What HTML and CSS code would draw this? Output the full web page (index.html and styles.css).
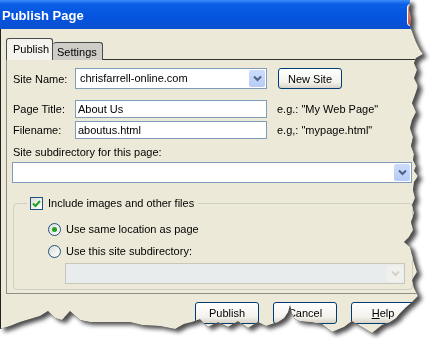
FILE: index.html
```html
<!DOCTYPE html>
<html>
<head>
    <title>Publish Page</title>
    <meta charset="UTF-8">
    <link rel="stylesheet" href="styles.css">
</head>
<body>
    <div class="torn-shadow">
        <div class="dialog">
            <div class="title-bar">
                <span class="title">Publish Page</span>
                <span class="close-btn"></span>
            </div>
            <div class="dialog-body">
                <div class="tabs">
                    <div class="tab active">Publish</div>
                    <div class="tab">Settings</div>
                </div>
                <div class="tab-panel">
                    <div class="row row-site">
                        <span class="field-label">Site Name:</span>
                        <div class="combo site-combo">
                            <span class="combo-text">chrisfarrell-online.com</span>
                            <span class="combo-btn">
                                <svg width="9" height="7" viewBox="0 0 9 7"><path d="M1 1.5 L4.5 5 L8 1.5" fill="none" stroke="#4d6185" stroke-width="2"/></svg>
                            </span>
                        </div>
                        <button class="xp-btn new-site">New Site</button>
                    </div>
                    <div class="row row-title">
                        <span class="field-label">Page Title:</span>
                        <div class="text-input">About Us</div>
                        <span class="hint">e.g.: "My Web Page"</span>
                    </div>
                    <div class="row row-file">
                        <span class="field-label">Filename:</span>
                        <div class="text-input">aboutus.html</div>
                        <span class="hint">e.g,: "mypage.html"</span>
                    </div>
                    <div class="sub-label">Site subdirectory for this page:</div>
                    <div class="combo sub-combo">
                        <span class="combo-text"></span>
                        <span class="combo-btn">
                            <svg width="9" height="7" viewBox="0 0 9 7"><path d="M1 1.5 L4.5 5 L8 1.5" fill="none" stroke="#4d6185" stroke-width="2"/></svg>
                        </span>
                    </div>
                    <fieldset class="group">
                        <legend class="group-legend">
                            <span class="checkbox">
                                <svg width="11" height="11" viewBox="0 0 11 11"><path d="M2 5.5 L4.5 8 L9 3" fill="none" stroke="#21a121" stroke-width="2"/></svg>
                            </span>
                            <span>Include images and other files</span>
                        </legend>
                        <div class="radio-row first">
                            <span class="radio checked"><span class="dot"></span></span>
                            <span>Use same location as page</span>
                        </div>
                        <div class="radio-row">
                            <span class="radio"></span>
                            <span>Use this site subdirectory:</span>
                        </div>
                        <div class="combo disabled-combo">
                            <span class="combo-text"></span>
                            <span class="combo-btn">
                                <svg width="9" height="7" viewBox="0 0 9 7"><path d="M1 1.5 L4.5 5 L8 1.5" fill="none" stroke="#d4d2c8" stroke-width="2"/></svg>
                            </span>
                        </div>
                    </fieldset>
                </div>
                <div class="button-row">
                    <button class="xp-btn">Publish</button>
                    <button class="xp-btn">Cancel</button>
                    <button class="xp-btn"><u>H</u>elp</button>
                </div>
            </div>
        </div>
    </div>
</body>
</html>
```

FILE: styles.css
```css
body {
    margin: 0;
    background-color: #fff;
    font-family: 'Liberation Sans', Arial, sans-serif;
    font-size: 11px;
    color: #000;
}

.torn-shadow {
    width: 435px;
    height: 339px;
    filter: drop-shadow(0 0 0.6px #111) drop-shadow(4px 3px 2px rgba(0, 0, 0, 0.7));
}

/* torn paper edge on the right and bottom */
.dialog {
    width: 435px;
    height: 339px;
    background-color: #ece9d8;
    clip-path: polygon(0 0, 410px 0, 409px 10px, 411px 18px, 410px 26px, 413px 34px, 416px 42px, 420px 50px, 423px 54px, 416px 58px, 414px 63px, 417px 70px, 414px 78px, 418px 86px, 415px 95px, 412px 103px, 416px 112px, 412px 120px, 410px 128px, 413px 137px, 411px 146px, 414px 154px, 413px 160px, 416px 166px, 414px 171px, 418px 176px, 414px 182px, 413px 190px, 415px 198px, 412px 205px, 414px 213px, 411px 222px, 413px 230px, 409px 237px, 404px 242px, 410px 247px, 412px 255px, 414px 263px, 417px 272px, 412px 280px, 414px 288px, 418px 296px, 412px 302px, 406px 307px, 400px 313px, 396px 318px, 390px 322px, 382px 325px, 372px 333px, 362px 327px, 352px 321px, 344px 327px, 332px 332px, 322px 324px, 312px 322px, 300px 321px, 295px 319px, 292px 313px, 290px 304px, 288px 312px, 284px 318px, 278px 322px, 266px 326px, 258px 322px, 248px 328px, 238px 321px, 228px 327px, 218px 322px, 208px 327px, 200px 319px, 192px 322px, 184px 324px, 175px 329px, 160px 326px, 142px 325px, 130px 322px, 110px 322px, 90px 322px, 80px 320px, 70px 311px, 62px 320px, 55px 318px, 48px 311px, 40px 316px, 30px 319px, 20px 322px, 10px 326px, 0 329px);
}

.title-bar {
    height: 29px;
    display: flex;
    align-items: center;
    background: linear-gradient(#3c8ef8 0, #0a5fe6 4px, #0553df 60%, #0a4fd0 100%);
    color: #fff;
}

.title {
    font-size: 13px;
    font-weight: bold;
    padding-left: 2px;
    padding-top: 1px;
}

.close-btn {
    margin-left: auto;
    margin-right: 7px;
    width: 19px;
    height: 20px;
    border: 1px solid #fff;
    border-radius: 3px;
    background: linear-gradient(#e8937a, #d5573a);
}

.dialog-body {
    border-left: 1px solid #222;
    padding: 9px 0 0 5px;
    height: 310px;
}

.tabs {
    display: flex;
    align-items: flex-end;
    height: 22px;
    margin-bottom: -1px;
    position: relative;
    z-index: 1;
}

.tab {
    border: 1px solid #4a4a4a;
    border-bottom: none;
    border-radius: 3px 3px 0 0;
    box-sizing: border-box;
}

.tab.active {
    width: 47px;
    height: 22px;
    padding: 4px 0 0 6px;
    background-color: #f4f3ee;
}

.tab:not(.active) {
    width: 50px;
    height: 18px;
    padding: 3px 0 0 4px;
    background-color: #cfcdc7;
    border-left: none;
}

.tab-panel {
    width: 412px;
    box-sizing: border-box;
    border: 1px solid #8f8f8a;
    border-top-color: #333;
    padding: 8px 4px 3px 6px;
}

.row {
    display: flex;
    align-items: center;
}

.row-title {
    margin-top: 11px;
}

.row-file {
    margin-top: 3px;
}

.field-label {
    width: 62px;
}

.combo {
    display: flex;
    height: 21px;
    box-sizing: border-box;
    border: 1px solid #7f9db9;
    background-color: #fff;
}

.combo-text {
    flex: 1;
    padding: 3px 0 0 4px;
}

.combo-btn {
    width: 16px;
    margin: 1px;
    border-radius: 2px;
    background: linear-gradient(#cddcfc, #b6cbf7);
    display: flex;
    align-items: center;
    justify-content: center;
}

.site-combo {
    width: 192px;
}

.xp-btn {
    font-family: 'Liberation Sans', Arial, sans-serif;
    font-size: 11px;
    color: #000;
    width: 64px;
    height: 22px;
    border: 1px solid #003c74;
    border-radius: 3px;
    background: linear-gradient(#ffffff, #f3f2ec 70%, #d8d3c7);
    padding: 0;
}

.new-site {
    margin-left: 11px;
    height: 21px;
}

.text-input {
    width: 192px;
    height: 18px;
    box-sizing: border-box;
    border: 1px solid #7f9db9;
    background-color: #fff;
    padding: 2px 0 0 2px;
}

.hint {
    margin-left: 10px;
}

.sub-label {
    margin-top: 7px;
    line-height: 13px;
}

.sub-combo {
    width: 400px;
    margin: 3px 0 0 -1px;
}

.group {
    width: 400px;
    box-sizing: border-box;
    margin: 14px 0 0 0;
    padding: 0 0 5px 34px;
    border: 1px solid #d0d0bf;
    border-radius: 4px;
}

.group-legend {
    display: flex;
    align-items: center;
    margin-left: -21px;
    padding: 0 4px 0 3px;
    line-height: 13px;
}

.checkbox {
    width: 11px;
    height: 11px;
    border: 1px solid #1c5180;
    background: linear-gradient(135deg, #dcdcd7, #fff);
    margin-right: 5px;
    display: flex;
}

.radio-row {
    display: flex;
    align-items: center;
    line-height: 13px;
    margin-top: 9px;
}

.radio-row.first {
    margin-top: 13px;
}

.radio {
    width: 11px;
    height: 11px;
    border: 1px solid #1c5180;
    border-radius: 50%;
    background: linear-gradient(135deg, #dcdcd7, #fff);
    margin-right: 5px;
    display: flex;
    align-items: center;
    justify-content: center;
}

.dot {
    width: 5px;
    height: 5px;
    border-radius: 50%;
    background-color: #21a121;
}

.disabled-combo {
    width: 340px;
    margin: 5px 0 0 17px;
    border-color: #c9c7ba;
    background-color: #e9ecec;
}

.disabled-combo .combo-btn {
    background: #f0f0ec;
}

.button-row {
    display: flex;
    gap: 14px;
    margin-top: 8px;
    padding-left: 189px;
}
```
